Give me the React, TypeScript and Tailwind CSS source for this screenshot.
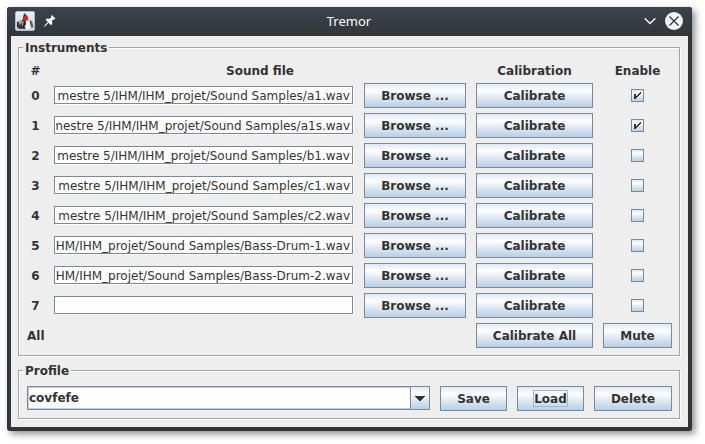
import { useState } from "react";

const GRADIENT =
  "bg-[linear-gradient(180deg,#dde8f3_0%,#ffffff_30%,#dde8f3_60%,#b8cfe5_100%)]";
const ETCHED =
  "min-w-0 border border-[#a3a3a3] pt-[7px] pr-[7px] pl-2 shadow-[1px_1px_0_#ffffff,inset_1px_1px_0_#ffffff]";
const LEGEND = "-ml-1 bg-[#eeeeee] px-0.5 pt-0.5 font-bold";

const SAMPLES = [
  { file: "mestre 5/IHM/IHM_projet/Sound Samples/a1.wav", on: true },
  { file: "mestre 5/IHM/IHM_projet/Sound Samples/a1s.wav", on: true },
  { file: "mestre 5/IHM/IHM_projet/Sound Samples/b1.wav", on: false },
  { file: "mestre 5/IHM/IHM_projet/Sound Samples/c1.wav", on: false },
  { file: "mestre 5/IHM/IHM_projet/Sound Samples/c2.wav", on: false },
  { file: "HM/IHM_projet/Sound Samples/Bass-Drum-1.wav", on: false },
  { file: "HM/IHM_projet/Sound Samples/Bass-Drum-2.wav", on: false },
  { file: "", on: false },
];

function MetalButton({
  children,
  className = "w-full",
  focused = false,
}: {
  children: string;
  className?: string;
  focused?: boolean;
}) {
  return (
    <button
      type="button"
      className={`flex h-[25px] items-center justify-center border border-[#7a8a99] font-bold whitespace-nowrap ${GRADIENT} ${className}`}
    >
      <span className={`px-px pt-0.5 ${focused ? "shadow-[inset_0_0_0_1px_#a3b8cc]" : ""}`}>
        {children}
      </span>
    </button>
  );
}

function Tick({ label, initial }: { label: string; initial: boolean }) {
  const [on, setOn] = useState(initial);
  return (
    <span className="mx-auto grid size-[13px]">
      <input
        type="checkbox"
        aria-label={label}
        checked={on}
        onChange={(e) => setOn(e.target.checked)}
        className={`col-start-1 row-start-1 size-[13px] appearance-none border border-[#7a8a99] ${GRADIENT}`}
      />
      {on && (
        <svg
          viewBox="0 0 13 13"
          shapeRendering="crispEdges"
          className="pointer-events-none col-start-1 row-start-1 size-[13px] fill-[#333333]"
        >
          <path d="M3 5h2v5h-2zM9 3h1v2h-1zM8 4h1v2h-1zM7 5h1v2h-1zM6 6h1v2h-1zM5 7h1v2h-1z" />
        </svg>
      )}
    </span>
  );
}

function DukeIcon() {
  return (
    <svg viewBox="0 0 20 20" className="size-5">
      <defs>
        <linearGradient id="tile" x1="0" y1="0" x2="0" y2="1">
          <stop offset="0" stopColor="#eeeef4" />
          <stop offset="1" stopColor="#cfd1de" />
        </linearGradient>
      </defs>
      <rect x="0.5" y="0.5" width="19" height="19" rx="1.5" fill="url(#tile)" stroke="#a9bdd6" />
      <path d="M2 10.500l4-1.500 2 1v6l-5 1-1.500-2z" fill="#a4a9ad" />
      <path d="M2 11h1.500l1.500 3 2-2 1 4-3 2-3-2z" fill="#34383a" />
      <path d="M9 2.500l1 0 2.500 3 1 4H7.500l.5-3z" fill="#3a3d40" />
      <path d="M7 9h5l1 5-3 4-4-1z" fill="#232628" />
      <path d="M10.500 9l3.500-.5 1.500 5-.5 4-3 .8-2.500-2.300 1.500-3z" fill="#fafafa" />
      <path d="M14.500 8.500l2.500 2 1.500 5.500-2 1-1.500-4z" fill="#5c6165" />
      <path d="M7.500 10l1 0-.5 4-1 1.500z" fill="#e6e8ea" />
      <path d="M2.500 16.500l5-.5 2 1.700-5 .3z" fill="#3b3e40" />
      <circle cx="10.700" cy="7.500" r="2.500" fill="#e3241c" />
    </svg>
  );
}

function TitleBar() {
  return (
    <header className="grid h-[29px] grid-cols-[1fr_auto_1fr] items-center bg-linear-to-b from-[#3d434a] to-[#31363b] pr-[9px] pb-px pl-2 text-[#fcfcfc]">
      <div className="flex items-center gap-2">
        <DukeIcon />
        <button type="button" aria-label="Keep above">
          <svg viewBox="0 0 14 14" className="size-3.5 fill-[#fcfcfc]">
            <path d="M8.800 1l3.700 3.700-1 .8-.8-.2-1.700 1.700.3 2.900-1.300 1.300-2.400-2.400L1.700 12.700l-.7-.7 3.900-3.900L2.500 5.700l1.300-1.300 2.900.3 1.700-1.700-.3-.9z" />
          </svg>
        </button>
      </div>
      <h1 className="font-['Noto_Sans',sans-serif] text-[13px] leading-5">Tremor</h1>
      <div className="flex items-center justify-end gap-[9px]">
        <button type="button" aria-label="Minimize">
          <svg viewBox="0 0 12 8" className="h-2 w-3 fill-none stroke-[#fcfcfc] stroke-[1.3]">
            <path d="M0.700 1.200l5.300 5.300L11.300 1.200" />
          </svg>
        </button>
        <button type="button" aria-label="Close">
          <svg viewBox="0 0 18 18" className="size-[18px]">
            <circle cx="9" cy="9" r="9" fill="#f4f4f4" />
            <path d="M4.500 4.500l9 9M13.500 4.500l-9 9" stroke="#31363b" strokeWidth="1.300" />
          </svg>
        </button>
      </div>
    </header>
  );
}

export default function App() {
  return (
    <div className="bg-white pt-[7px] pr-[13px] pb-[13px] pl-[7px] font-['DejaVu_Sans',sans-serif] text-[12px] leading-[15px] text-[#333333]">
      <div className="overflow-hidden rounded-[3px] bg-[#31363b] shadow-[3px_3px_7px_rgba(0,0,0,0.45)]">
        <TitleBar />
        <main className="mx-1 mb-1 flex flex-col gap-1.5 bg-[#eeeeee] pt-[3px] pr-2 pb-2 pl-[7px]">
          <fieldset className={`pb-1.5 ${ETCHED}`}>
            <legend className={LEGEND}>Instruments</legend>
            <table className="w-full table-fixed border-collapse">
              <colgroup>
                <col className="w-[17px]" />
                <col />
                <col className="w-[112px]" />
                <col className="w-[127px]" />
                <col className="w-[79px]" />
              </colgroup>
              <thead>
                <tr className="h-4">
                  <th className="p-0 align-bottom">#</th>
                  <th colSpan={2} className="p-0 pl-2.5 align-bottom">Sound file</th>
                  <th className="p-0 pl-2.5 align-bottom">Calibration</th>
                  <th className="p-0 pl-2.5 align-bottom">Enable</th>
                </tr>
              </thead>
              <tbody>
                {SAMPLES.map((s, i) => (
                  <tr key={i}>
                    <th className="p-0 pt-[5px]">{i}</th>
                    <td className="p-0 pt-0.5 pl-2.5">
                      <input
                        type="text"
                        dir="rtl"
                        aria-label={`Sound file ${i}`}
                        defaultValue={s.file}
                        className="block h-[18px] w-[calc(100%-1px)] border border-[#7a8a99] bg-white pt-px pr-0.5 pl-px shadow-[1px_1px_0_#ffffff]"
                      />
                    </td>
                    <td className="p-0 pt-1 pb-px pl-2.5">
                      <MetalButton>Browse ...</MetalButton>
                    </td>
                    <td className="p-0 pt-1 pb-px pl-2.5">
                      <MetalButton>Calibrate</MetalButton>
                    </td>
                    <td className="p-0 pt-[3px] pl-2.5">
                      <Tick label={`Enable ${i}`} initial={s.on} />
                    </td>
                  </tr>
                ))}
                <tr>
                  <th className="p-0 pt-[5px] text-left whitespace-nowrap">All</th>
                  <td colSpan={2} />
                  <td className="p-0 pt-1 pb-px pl-2.5">
                    <MetalButton>Calibrate All</MetalButton>
                  </td>
                  <td className="p-0 pt-1 pb-px pl-2.5">
                    <MetalButton>Mute</MetalButton>
                  </td>
                </tr>
              </tbody>
            </table>
          </fieldset>

          <fieldset className={`pb-[7px] ${ETCHED}`}>
            <legend className={LEGEND}>Profile</legend>
            <div className="flex items-start gap-2.5">
              <div className="relative h-6 min-w-0 flex-1">
                <select
                  aria-label="Profile"
                  className="block h-6 w-full appearance-none border border-[#7a8a99] bg-white pr-5 pl-px font-bold shadow-[inset_0_0_0_1px_#b8cfe5]"
                >
                  <option>covfefe</option>
                </select>
                <span
                  className={`pointer-events-none absolute top-0 right-0 flex h-6 w-5 items-center justify-center border border-[#7a8a99] ${GRADIENT}`}
                >
                  <svg viewBox="0 0 10 5" shapeRendering="crispEdges" className="h-[5px] w-2.5 fill-[#333333]">
                    <path d="M0 0h10v1h-1v1h-1v1h-1v1h-1v1h-2v-1h-1v-1h-1v-1h-1v-1h-1z" />
                  </svg>
                </span>
              </div>
              <MetalButton className="w-[67px]">Save</MetalButton>
              <MetalButton className="w-[67px]" focused>Load</MetalButton>
              <MetalButton className="w-[78px]">Delete</MetalButton>
            </div>
          </fieldset>
        </main>
      </div>
    </div>
  );
}
